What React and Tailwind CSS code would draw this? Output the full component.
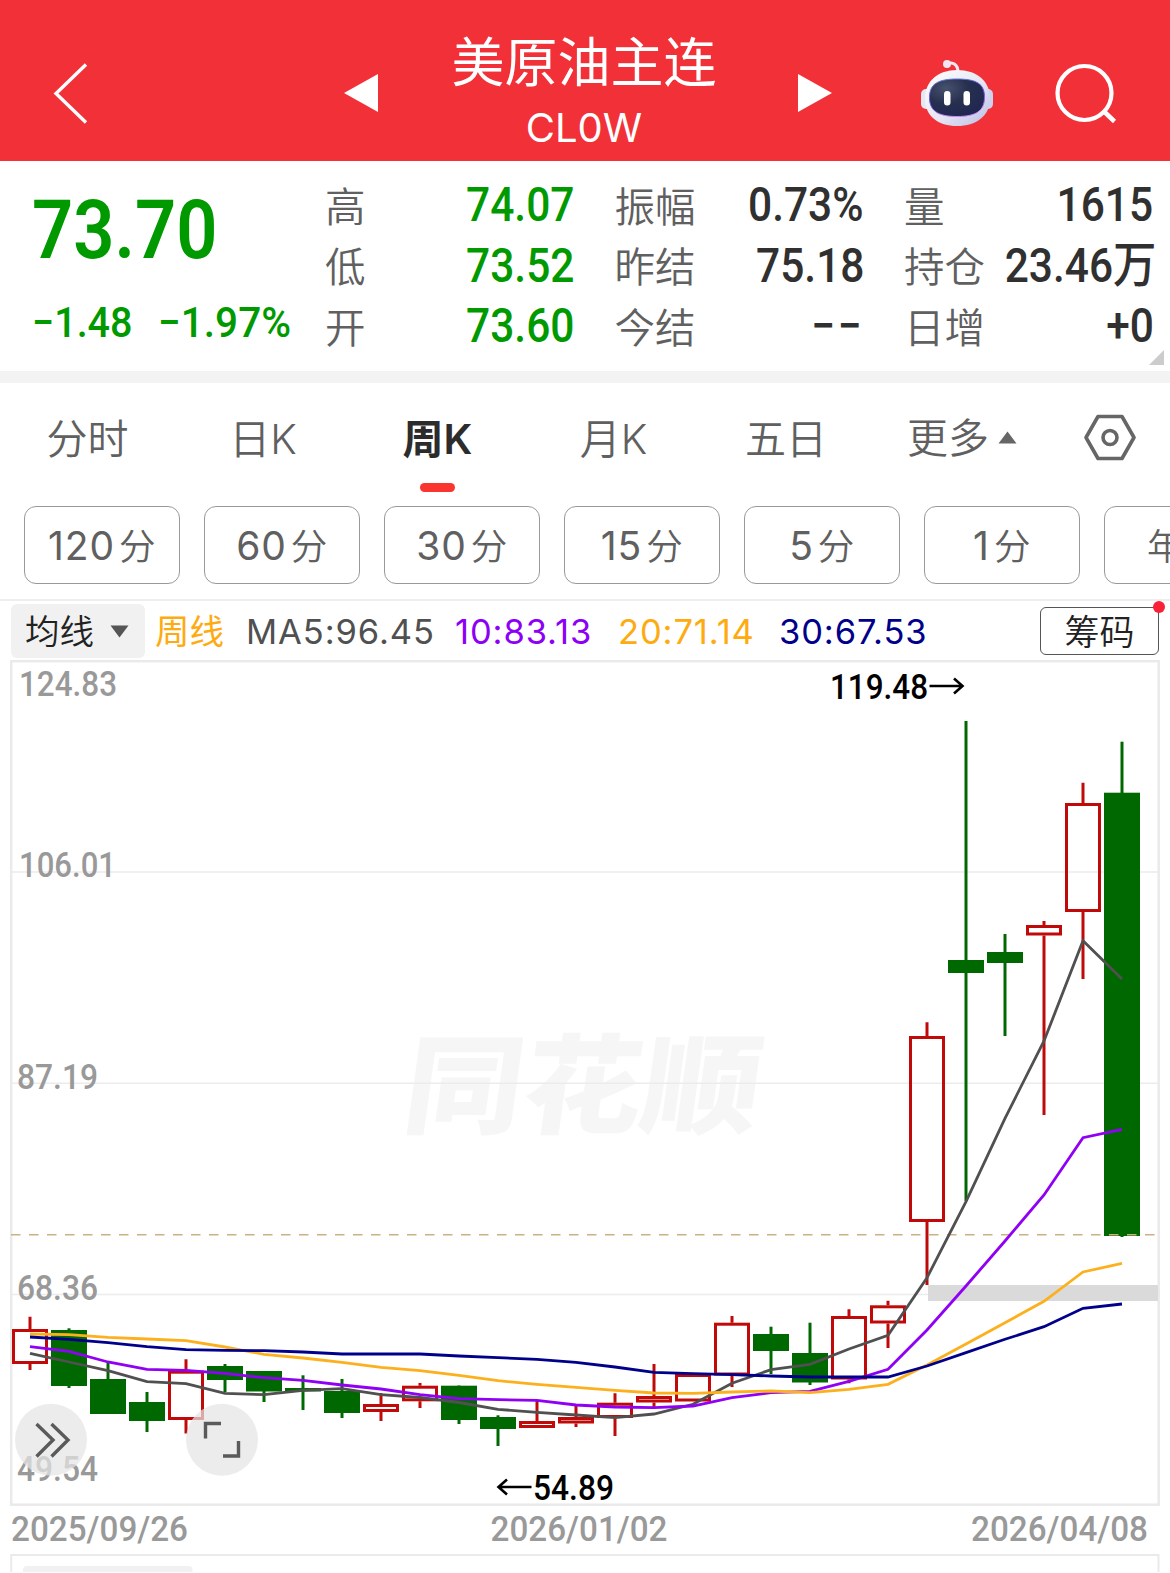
import React, { useState } from "react";
import clsx from "clsx";

// [direction, high, body top, body bottom, low] in canvas units
const CANDLES = [
  ["up", 1316.7, 1329, 1364, 1370],
  ["down", 1328.3, 1330, 1386, 1388],
  ["down", 1362.7, 1379, 1414, 1414],
  ["down", 1392, 1402, 1421, 1432],
  ["up", 1359.3, 1370.7, 1420, 1433.5],
  ["down", 1364, 1366, 1380, 1392],
  ["down", 1371, 1371, 1391.5, 1402],
  ["down", 1375.3, 1388, 1391.5, 1410],
  ["down", 1379, 1391, 1413, 1418],
  ["up", 1393, 1404, 1412, 1421],
  ["up", 1383, 1385.7, 1401.3, 1408],
  ["down", 1385.5, 1385.7, 1420, 1424],
  ["down", 1415.3, 1417, 1429, 1446],
  ["up", 1400, 1421, 1428, 1428],
  ["up", 1405, 1417, 1423.5, 1427],
  ["up", 1393.3, 1402.7, 1418, 1436],
  ["up", 1364, 1396, 1402.5, 1407],
  ["up", 1374, 1374, 1401.5, 1401.5],
  ["up", 1316, 1322.7, 1375.5, 1387],
  ["down", 1326.7, 1334, 1351, 1374],
  ["down", 1322.7, 1353, 1382.5, 1385],
  ["up", 1309.3, 1316, 1379.5, 1383.3],
  ["up", 1300.7, 1305.3, 1323.5, 1348],
  ["up", 1022.3, 1036, 1222, 1285],
  ["down", 721, 960, 973, 1201],
  ["down", 934, 952, 963, 1036],
  ["up", 921, 925, 935.5, 1115],
  ["up", 782.7, 803, 912, 979],
  ["down", 741.7, 792.7, 1236, 1237],
];

const AVERAGES = [
  {
    color: "#505050",
    points: [
      1353.3, 1362, 1370.7, 1381.7, 1383.7, 1393.3, 1394.7, 1390.3, 1388.7,
      1394.7, 1397.5, 1402.5, 1409.3, 1412.3, 1415, 1417.7, 1414, 1404.3,
      1383.3, 1369.7, 1364.3, 1349, 1335.3, 1277.7, 1201.7, 1118.3, 1041,
      940.7, 979,
    ],
  },
  {
    color: "#9000f5",
    points: [
      1346.7, 1351.3, 1362, 1369.3, 1370.3, 1373.3, 1377.7, 1380.3, 1385, 1389,
      1394.7, 1398.7, 1399.7, 1400.3, 1405, 1407, 1407.7, 1406, 1397.7, 1392.7,
      1391.3, 1381.3, 1369.3, 1330, 1286, 1241, 1195, 1137.7, 1129.3,
    ],
  },
  {
    color: "#fdb01e",
    points: [
      1334, 1334.7, 1337.3, 1339, 1340.7, 1347, 1354.3, 1358, 1362.3, 1367.3,
      1370.7, 1375.3, 1380.7, 1384.3, 1387.3, 1390.3, 1393, 1393.3, 1392, 1391,
      1392.7, 1389.3, 1384.3, 1365, 1344, 1322.7, 1301.3, 1272, 1263.3,
    ],
  },
  {
    color: "#00008b",
    points: [
      1337, 1339.3, 1342.7, 1346.7, 1349.7, 1350.3, 1350.7, 1352, 1354, 1354,
      1354, 1356, 1357.7, 1359.3, 1362.3, 1367, 1372.3, 1373.7, 1374.7, 1376,
      1377, 1377, 1377, 1366, 1352.7, 1339.3, 1326.7, 1308.3, 1304,
    ],
  },
];

const QUOTES = [
  [
    { label: "高", value: "74.07", green: true },
    { label: "低", value: "73.52", green: true },
    { label: "开", value: "73.60", green: true },
  ],
  [
    { label: "振幅", value: "0.73%" },
    { label: "昨结", value: "75.18" },
    { label: "今结", value: "−−", spaced: true },
  ],
  [
    { label: "量", value: "1615" },
    { label: "持仓", value: "23.46", unit: "万" },
    { label: "日增", value: "+0" },
  ],
];

const TABS = [
  { name: "分时", width: "w-[175px]" },
  { name: "日K", width: "w-[176px]" },
  { name: "周K", width: "w-[173px]" },
  { name: "月K", width: "w-[179px]" },
  { name: "五日", width: "w-[166px]" },
];

const PERIODS = ["120", "60", "30", "15", "5", "1"];

const candleX = (index) => 30 + index * 39;

const Robot = () => (
  <svg width="76" height="72" viewBox="919 56 76 72" fill="none">
    <defs>
      <linearGradient id="shell" x1="0" y1="0" x2="1" y2="1">
        <stop offset="0" stopColor="#ffffff" />
        <stop offset="0.55" stopColor="#e6e6f4" />
        <stop offset="1" stopColor="#b9bce4" />
      </linearGradient>
      <linearGradient id="rim" x1="0" y1="0" x2="0.3" y2="1">
        <stop offset="0" stopColor="#5b7fd0" />
        <stop offset="0.6" stopColor="#6a4be0" />
        <stop offset="1" stopColor="#c98af5" />
      </linearGradient>
      <radialGradient id="visor" cx="0.3" cy="0.25" r="0.8">
        <stop offset="0" stopColor="#47526f" />
        <stop offset="0.5" stopColor="#28304f" />
        <stop offset="1" stopColor="#1f2752" />
      </radialGradient>
    </defs>
    <path d="M947 63C953 60 958 64 958 71" stroke="#f1e6f2" strokeWidth="3" />
    <circle cx="947" cy="63" r="4" fill="#f1e6f2" />
    <rect x="921" y="88" width="12" height="20" rx="5" fill="#e6e6f4" />
    <rect x="981" y="88" width="12" height="20" rx="5" fill="#cdd0ee" />
    <path
      d="M957 69C977 69 990 80 990 97.500C990 115 976 125 957 125C938 125 925 115 925 97.500C925 80 938 69 957 69Z"
      fill="url(#shell)"
    />
    <path
      d="M957 78C977 78 984.500 83 984.500 96.500C984.500 110 976 115.500 957 115.500C938 115.500 929.500 110 929.500 96.500C929.500 83 938 78 957 78Z"
      fill="url(#visor)"
      stroke="url(#rim)"
      strokeWidth="1"
    />
    <rect x="944" y="90" width="6.500" height="14.500" rx="3.250" fill="#fff" />
    <rect x="963.500" y="90" width="6.500" height="14.500" rx="3.250" fill="#fff" />
  </svg>
);

const Header = () => (
  <header className="flex h-[161px] items-center bg-[#f23038] pt-[25px] text-white">
    <svg className="mt-[2px] ml-[52px]" width="38" height="64" viewBox="0 0 38 64" fill="none">
      <path d="M34 2.500L4 31.500L34 60.500" stroke="#fff" strokeWidth="3.400" />
    </svg>
    <svg className="ml-[254px]" width="34" height="38" viewBox="0 0 34 38">
      <path d="M0 19L34 0V38Z" fill="#fff" />
    </svg>
    <div className="-mt-[1px] mr-[8px] flex w-[412px] flex-col items-center">
      <h1 className="text-[53px] leading-[70px]">美原油主连</h1>
      <p className="font-[Inter] text-[40px] leading-[58px]">CL0W</p>
    </div>
    <svg width="34" height="38" viewBox="0 0 34 38">
      <path d="M34 19L0 0V38Z" fill="#fff" />
    </svg>
    <div className="ml-[87px]">
      <Robot />
    </div>
    <svg className="ml-[59px]" width="66" height="64" viewBox="1054 61 66 64" fill="none">
      <circle cx="1084.500" cy="93" r="27" stroke="#fff" strokeWidth="4.200" />
      <path d="M1103.500 111L1114.500 121.500" stroke="#fff" strokeWidth="4.500" />
    </svg>
  </header>
);

const QuotePanel = () => (
  <section className="relative flex h-[210px] bg-white">
    <div className="w-[325px] pl-[32px] text-[#009a00]">
      <div className="mt-[18px] h-[102px] origin-left scale-x-[0.88] text-[82px] leading-[102px] font-semibold">
        73.70
      </div>
      <div className="mt-[14px] flex h-[56px] text-[42px] leading-[56px] font-medium">
        <span className="w-[126px]">
          <span className="inline-block origin-left scale-x-[0.94]">−1.48</span>
        </span>
        <span className="inline-block origin-left scale-x-[0.965]">−1.97%</span>
      </div>
    </div>
    <div className="flex gap-[40px] pt-[14px]">
      {QUOTES.map((column, i) => (
        <div key={i} className="w-[249.500px]">
          {column.map((item) => (
            <div
              key={item.label}
              className="flex h-[60.5px] items-center justify-between whitespace-nowrap"
            >
              <span className="pt-[5px] text-[40.500px] leading-[60px] font-[350] text-[#606060]">
                {item.label}
              </span>
              <span
                className={clsx(
                  "origin-right scale-x-[0.885] text-[48px] leading-[60px] font-medium",
                  item.green ? "text-[#009a00]" : "text-[#303030]",
                  item.spaced && "tracking-[3px]"
                )}
              >
                {item.value}
                {item.unit && <span className="text-[49px]">{item.unit}</span>}
              </span>
            </div>
          ))}
        </div>
      ))}
    </div>
    <svg className="absolute right-[6px] bottom-[6px]" width="15" height="15">
      <path d="M15 0V15H0Z" fill="#ccc" />
    </svg>
  </section>
);

const Tabs = ({ active, onChange }) => (
  <nav className="flex h-[123px] text-[41px] font-[350] text-[#606060]">
    {TABS.map((tab) => (
      <button
        key={tab.name}
        onClick={() => onChange(tab.name)}
        className={clsx(
          "flex flex-col items-center pt-[26px] leading-[60px]",
          tab.width,
          tab.name === active && "font-bold text-[#2c2c2c]"
        )}
      >
        <span>
          {tab.name[0]}
          <span
            className={clsx(
              "font-[Inter,'Noto_Sans_CJK_SC']",
              tab.name === active && "font-semibold"
            )}
          >
            {tab.name[1]}
          </span>
        </span>
        {tab.name === active && (
          <span className="mt-[13px] h-[9px] w-[35px] rounded-full bg-[#fa3530]" />
        )}
      </button>
    ))}
    <div className="ml-[38px] flex h-[110px] items-start pt-[26px] leading-[60px]">
      更多
      <svg className="mt-[22px] ml-[9px]" width="19" height="13">
        <path d="M9.500 0.500L18.500 12.500H0.500Z" fill="#666" />
      </svg>
    </div>
    <svg className="mt-[30px] ml-[66px]" width="54" height="49" viewBox="0 0 54 49" fill="none">
      <path
        d="M15 3.500H39L51 24.500L39 45.500H15L3 24.500Z"
        stroke="#666"
        strokeWidth="3.600"
        strokeLinejoin="round"
      />
      <circle cx="27" cy="24.500" r="7" stroke="#666" strokeWidth="3.600" />
    </svg>
  </nav>
);

const Periods = () => (
  <div className="flex h-[93px] gap-[24.500px] overflow-hidden pl-[24px] text-[#606060]">
    {PERIODS.map((minutes) => (
      <button
        key={minutes}
        className="flex h-[78px] w-[155.500px] shrink-0 items-center justify-center gap-[4px] rounded-[12px] border-[1.500px] border-[#999] pt-[3px]"
      >
        <span className="font-[Inter] text-[39px] font-[380] tracking-[0.9px]">{minutes}</span>
        <span className="pt-[3px] text-[36.500px] font-[350]">分</span>
      </button>
    ))}
    <button className="flex h-[78px] w-[155.500px] shrink-0 items-center rounded-[12px] border-[1.500px] border-[#999] pt-[6px] pl-[42px] text-[36.500px] font-[350]">
      年K
    </button>
  </div>
);

const Indicators = () => (
  <div className="flex h-[61px] items-center border-t-2 border-[#eee] pl-[11px] text-[34.500px]">
    <button className="flex h-[54px] w-[134px] items-center rounded-[6px] bg-[#f1f1f1] pt-[5px] pl-[14px] font-[350] text-[#222]">
      均线
      <svg className="-mt-[4px] ml-[16px]" width="19" height="13">
        <path d="M0.500 0.500H18.500L9.500 12.500Z" fill="#555" />
      </svg>
    </button>
    <span className="ml-[10px] w-[91px] pt-[5px] text-[#fdab10]">周线</span>
    <div className="flex pt-[2px] font-[Inter] text-[34.500px] font-normal tracking-[0.9px]">
      <span className="w-[209px] text-[#505050]">MA5:96.45</span>
      <span className="w-[163px] text-[#8c00f5]">10:83.13</span>
      <span className="w-[161px] text-[#fdab10]">20:71.14</span>
      <span className="text-[#00008b]">30:67.53</span>
    </div>
    <button className="relative mr-[11px] ml-auto h-[48px] w-[119px] rounded-[6px] border-[1.500px] border-[#555] pt-[4px] text-[35px] leading-[44px] font-[350] text-[#222]">
      筹码
      <span className="absolute -top-[7px] -right-[7px] size-[12px] rounded-full bg-[#fa2038]" />
    </button>
  </div>
);

const Label = ({ x, y, width, color = "#999", children }) => (
  <text
    x={x}
    y={y}
    textLength={width}
    lengthAdjust="spacingAndGlyphs"
    fontSize="35"
    fontWeight="500"
    fill={color}
  >
    {children}
  </text>
);

const Candle = ({ index, data }) => {
  const [direction, high, top, bottom, low] = data;
  const x = candleX(index);

  if (direction === "down") {
    return (
      <g fill="#006800">
        <rect x={x - 1.5} y={high} width="3" height={low - high} />
        <rect x={x - 18} y={top} width="36" height={bottom - top} />
      </g>
    );
  }
  return (
    <g stroke="#c00a0a" strokeWidth="3" fill="none">
      <path d={`M${x} ${high}V${top}M${x} ${bottom}V${low}`} />
      <rect x={x - 16.5} y={top + 1.5} width="33" height={bottom - top - 3} />
    </g>
  );
};

const Chart = () => (
  <svg className="block" width="1170" height="912" viewBox="0 660 1170 912">
    {/* Watermark */}
    <text
      transform="translate(400 1125) skewX(-8)"
      fontSize="108"
      fontWeight="900"
      fill="#f6f6f6"
      textLength="356"
      lengthAdjust="spacingAndGlyphs"
    >
      同花顺
    </text>

    {/* Frame and grid */}
    <rect x="11.200" y="661.200" width="1147.500" height="843.500" fill="none" stroke="#eaeaea" strokeWidth="2.500" />
    <path d="M12 872H1158M12 1083.300H1158M12 1294.600H1158" stroke="#ececec" strokeWidth="1.500" />
    <rect x="928" y="1285" width="230" height="16" fill="#dadada" />

    <Label x={19} y={696} width={98}>124.83</Label>
    <Label x={19} y={877} width={97}>106.01</Label>
    <Label x={17} y={1088.5} width={81}>87.19</Label>
    <Label x={17} y={1299.5} width={81}>68.36</Label>
    <Label x={17} y={1481} width={81}>49.54</Label>

    {CANDLES.map((data, index) => (
      <Candle key={index} index={index} data={data} />
    ))}
    <path d="M11 1234.700H1158" stroke="#cbb083" strokeWidth="1.500" strokeDasharray="9.500 8.500" />
    {AVERAGES.map(({ color, points }) => (
      <polyline
        key={color}
        points={points.map((y, index) => `${candleX(index)},${y}`).join(" ")}
        fill="none"
        stroke={color}
        strokeWidth="2.800"
      />
    ))}

    {/* Highest and lowest price */}
    <Label x={830} y={699} width={98} color="#000">119.48</Label>
    <path d="M929.500 686H962M954 678.500L962.500 686L954 693.500" fill="none" stroke="#000" strokeWidth="2.600" />
    <Label x={533} y={1500} width={81} color="#000">54.89</Label>
    <path d="M531.500 1487H499M507 1479.500L498.500 1487L507 1494.500" fill="none" stroke="#000" strokeWidth="2.600" />

    {/* Floating controls */}
    <circle cx="51" cy="1439.700" r="36" fill="#e5e5e5" fillOpacity="0.720" />
    <circle cx="222" cy="1439.700" r="36" fill="#e5e5e5" fillOpacity="0.720" />
    <g fill="none" stroke="#5a5a5a" strokeWidth="3.400">
      <path d="M36.500 1424L53 1440L36.500 1456.500M51.500 1424L68 1440L51.500 1456.500" />
      <path d="M205.500 1438.500V1423.500H221M238.500 1441V1456H223" />
    </g>

    <Label x={11} y={1541} width={177}>2025/09/26</Label>
    <Label x={490.5} y={1541} width={177}>2026/01/02</Label>
    <Label x={971} y={1541} width={177}>2026/04/08</Label>

    {/* Top edge of the volume panel */}
    <path d="M11.200 1573V1555H1158.500V1573" fill="none" stroke="#eaeaea" strokeWidth="2" />
    <rect x="23" y="1566" width="169.500" height="20" rx="4" fill="#f1f1f1" />
  </svg>
);

const App = () => {
  const [tab, setTab] = useState("周K");

  return (
    <main className="h-[1573px] w-[1170px] overflow-hidden bg-white font-[Roboto,'Noto_Sans_CJK_SC',sans-serif]">
      <Header />
      <QuotePanel />
      <div className="h-[12px] bg-[#f3f3f3]" />
      <Tabs active={tab} onChange={setTab} />
      <Periods />
      <Indicators />
      <Chart />
    </main>
  );
};

export default App;
